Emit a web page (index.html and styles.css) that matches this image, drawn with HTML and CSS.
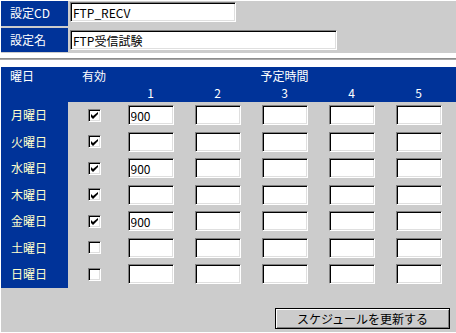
FILE: index.html
```html
<!DOCTYPE html>
<html lang="ja">
<head>
<meta charset="utf-8">
<title>スケジュール設定</title>
<link rel="stylesheet" href="styles.css">
</head>
<body>
<div class="top">
  <div class="lbl">設定CD</div>
  <div class="cell"><input class="tb tb-cd" type="text" value="FTP_RECV"></div>
  <div class="lbl lbl2">設定名</div>
  <div class="cell cell2"><input class="tb tb-name" type="text" value="FTP受信試験"></div>
</div>
<div class="sep"></div>
<div class="sched">
  <div class="head">
    <div class="h-day">曜日</div>
    <div class="h-en">有効</div>
    <div class="h-plan">予定時間</div>
    <div class="h-num n1">1</div>
    <div class="h-num n2">2</div>
    <div class="h-num n3">3</div>
    <div class="h-num n4">4</div>
    <div class="h-num n5">5</div>
  </div>
  <div class="rows">
    <div class="day">月曜日</div>
    <div class="chk"><span class="cb"><svg viewBox="0 0 7 7" width="7" height="7"><path d="M0 2v3l2 2 5-5v-2L2 4z" fill="#000"/></svg></span></div>
    <div class="t"><input class="tb tm" type="text" value="900"></div>
    <div class="t"><input class="tb tm" type="text" value=""></div>
    <div class="t"><input class="tb tm" type="text" value=""></div>
    <div class="t"><input class="tb tm" type="text" value=""></div>
    <div class="t"><input class="tb tm" type="text" value=""></div>

    <div class="day">火曜日</div>
    <div class="chk"><span class="cb"><svg viewBox="0 0 7 7" width="7" height="7"><path d="M0 2v3l2 2 5-5v-2L2 4z" fill="#000"/></svg></span></div>
    <div class="t"><input class="tb tm" type="text" value=""></div>
    <div class="t"><input class="tb tm" type="text" value=""></div>
    <div class="t"><input class="tb tm" type="text" value=""></div>
    <div class="t"><input class="tb tm" type="text" value=""></div>
    <div class="t"><input class="tb tm" type="text" value=""></div>

    <div class="day">水曜日</div>
    <div class="chk"><span class="cb"><svg viewBox="0 0 7 7" width="7" height="7"><path d="M0 2v3l2 2 5-5v-2L2 4z" fill="#000"/></svg></span></div>
    <div class="t"><input class="tb tm" type="text" value="900"></div>
    <div class="t"><input class="tb tm" type="text" value=""></div>
    <div class="t"><input class="tb tm" type="text" value=""></div>
    <div class="t"><input class="tb tm" type="text" value=""></div>
    <div class="t"><input class="tb tm" type="text" value=""></div>

    <div class="day">木曜日</div>
    <div class="chk"><span class="cb"><svg viewBox="0 0 7 7" width="7" height="7"><path d="M0 2v3l2 2 5-5v-2L2 4z" fill="#000"/></svg></span></div>
    <div class="t"><input class="tb tm" type="text" value=""></div>
    <div class="t"><input class="tb tm" type="text" value=""></div>
    <div class="t"><input class="tb tm" type="text" value=""></div>
    <div class="t"><input class="tb tm" type="text" value=""></div>
    <div class="t"><input class="tb tm" type="text" value=""></div>

    <div class="day">金曜日</div>
    <div class="chk"><span class="cb"><svg viewBox="0 0 7 7" width="7" height="7"><path d="M0 2v3l2 2 5-5v-2L2 4z" fill="#000"/></svg></span></div>
    <div class="t"><input class="tb tm" type="text" value="900"></div>
    <div class="t"><input class="tb tm" type="text" value=""></div>
    <div class="t"><input class="tb tm" type="text" value=""></div>
    <div class="t"><input class="tb tm" type="text" value=""></div>
    <div class="t"><input class="tb tm" type="text" value=""></div>

    <div class="day">土曜日</div>
    <div class="chk"><span class="cb"></span></div>
    <div class="t"><input class="tb tm" type="text" value=""></div>
    <div class="t"><input class="tb tm" type="text" value=""></div>
    <div class="t"><input class="tb tm" type="text" value=""></div>
    <div class="t"><input class="tb tm" type="text" value=""></div>
    <div class="t"><input class="tb tm" type="text" value=""></div>

    <div class="day">日曜日</div>
    <div class="chk"><span class="cb"></span></div>
    <div class="t"><input class="tb tm" type="text" value=""></div>
    <div class="t"><input class="tb tm" type="text" value=""></div>
    <div class="t"><input class="tb tm" type="text" value=""></div>
    <div class="t"><input class="tb tm" type="text" value=""></div>
    <div class="t"><input class="tb tm" type="text" value=""></div>
  </div>
  <div class="actions">
    <button class="btn" type="button">スケジュールを更新する</button>
  </div>
</div>
</body>
</html>
```

FILE: styles.css
```css
html, body {
  margin: 0;
  padding: 0;
  background: #ffffff;
  height: 100%;
  overflow: hidden;
}
body {
  font-family: "Noto Sans CJK JP", "Liberation Sans", sans-serif;
  font-size: 12px;
  line-height: 1;
  color: #000;
}

/* top settings panel */
.top {
  margin: 1px 0 0 1px;
  background: #cccccc;
  display: grid;
  grid-template-columns: 67px 1fr;
  grid-template-rows: 25px 24px;
  column-gap: 2px;
  row-gap: 2px;
  padding-bottom: 1px;
}
.lbl {
  background: #003399;
  color: #ffffff;
  display: flex;
  align-items: center;
  padding-left: 9px;
  padding-bottom: 2px;
}
.lbl2 { padding-bottom: 0; }
.cell {
  display: flex;
  align-items: center;
  padding-bottom: 3px;
}
.cell2 { padding-bottom: 1px; }

.tb {
  box-sizing: border-box;
  height: 20px;
  margin: 0;
  padding: 1px 0 0 2px;
  font-family: "Noto Sans CJK JP", "Liberation Sans", sans-serif;
  font-size: 12px;
  color: #000;
  background: #ffffff;
  border-style: solid;
  border-width: 1px;
  border-color: #808080 #ffffff #ffffff #808080;
  box-shadow: inset 1px 1px 0 #000000, inset -1px -1px 0 #dfdfdf;
  outline: none;
}
.tb-cd { width: 166px; }
.tb-name { width: 267px; }

.sep {
  height: 0;
  margin: 5px 0 0 0;
  border-top: 1px solid #8c8c8c;
  border-bottom: 1px solid #a8a8a8;
}

/* schedule panel */
.sched {
  margin: 7px 0 0 1px;
  background: #cccccc;
  height: 265px;
}
.head {
  background: #003399;
  color: #ffffff;
  display: grid;
  grid-template-columns: 67px 49px repeat(5, 67px) 1fr;
  grid-template-rows: 16px 19px;
}
.h-day {
  grid-column: 1;
  grid-row: 1;
  padding-left: 9px;
  display: flex;
  align-items: center;
  padding-top: 1px;
}
.h-en {
  grid-column: 2;
  grid-row: 1;
  display: flex;
  align-items: center;
  justify-content: center;
  padding-left: 3px;
  padding-top: 1px;
}
.h-plan {
  grid-column: 3 / 8;
  grid-row: 1;
  display: flex;
  align-items: center;
  justify-content: center;
  padding-top: 1px;
}
.h-num {
  grid-row: 2;
  display: flex;
  align-items: center;
  justify-content: center;
}
.n1 { grid-column: 3; }
.n2 { grid-column: 4; }
.n3 { grid-column: 5; }
.n4 { grid-column: 6; }
.n5 { grid-column: 7; }

.rows {
  display: grid;
  grid-template-columns: 67px 49px repeat(5, 67px);
  grid-template-rows: repeat(7, 26.5px);
}
.day {
  background: #003399;
  color: #ffffcc;
  display: flex;
  align-items: center;
  padding-left: 10px;
}
.chk {
  display: flex;
  align-items: center;
  justify-content: center;
  padding-left: 3px;
}
.cb {
  box-sizing: border-box;
  width: 13px;
  height: 13px;
  background: #ffffff;
  border-style: solid;
  border-width: 1px;
  border-color: #808080 #ffffff #ffffff #808080;
  box-shadow: inset 1px 1px 0 #000000, inset -1px -1px 0 #dfdfdf;
  display: flex;
  align-items: center;
  justify-content: center;
  padding: 1px 0 0 1px;
}
.cb svg { display: block; }
.t {
  display: flex;
  align-items: center;
  justify-content: center;
}
.tm { width: 46px; }

.actions {
  display: flex;
  justify-content: flex-end;
  padding: 20px 6px 0 0;
}
.btn {
  box-sizing: border-box;
  width: 175px;
  height: 21px;
  margin: 0;
  padding: 0;
  font-family: "Noto Sans CJK JP", "Liberation Sans", sans-serif;
  font-size: 12px;
  color: #000;
  background: #cccccc;
  border: 1px solid #000000;
  box-shadow: inset 1px 1px 0 #ffffff, inset -1px -1px 0 #808080;
}
```
